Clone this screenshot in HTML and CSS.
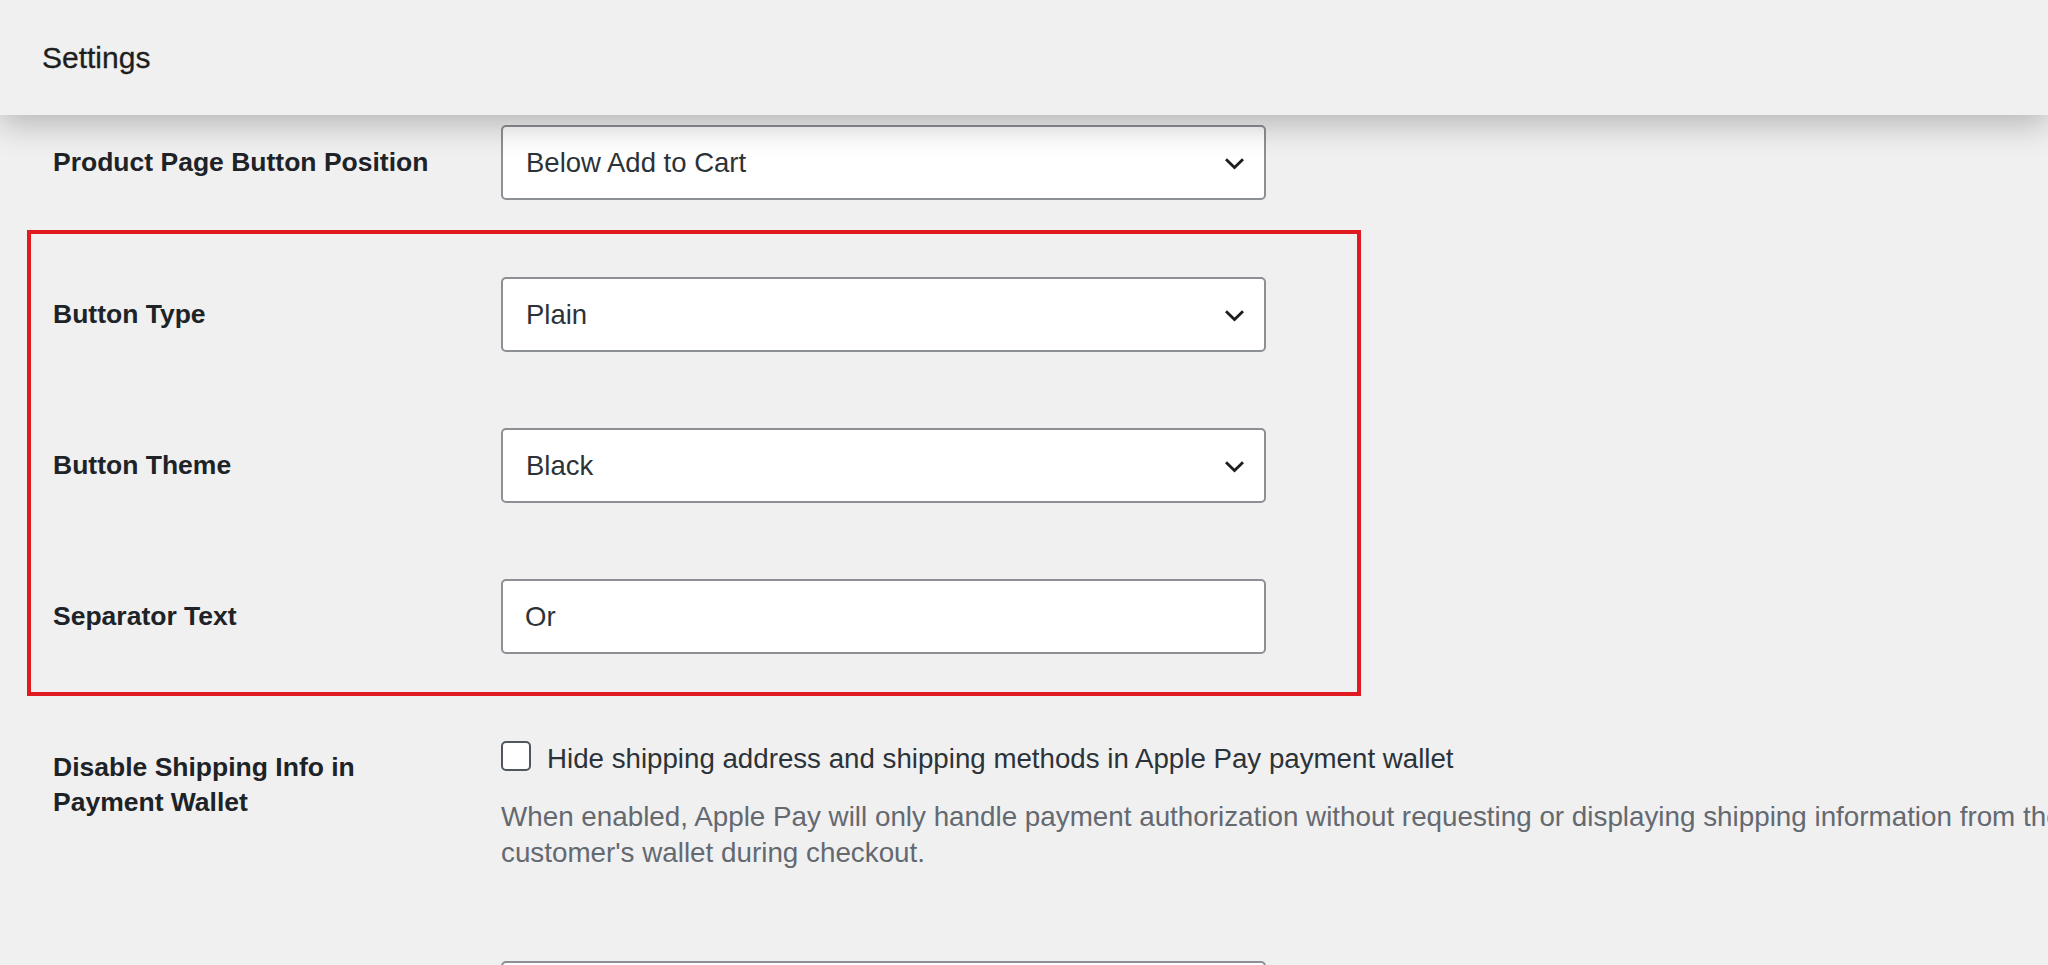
FILE: index.html
```html
<!DOCTYPE html>
<html lang="en">
<head>
<meta charset="utf-8">
<title>Settings</title>
<link rel="stylesheet" href="styles.css">
</head>
<body>
<header class="topbar">
  <h1 class="topbar-title">Settings</h1>
</header>
<main class="settings">
  <div class="row row-first">
    <label class="row-label" for="pos">Product Page Button Position</label>
    <div class="select-wrap">
      <select id="pos" class="control select"><option>Below Add to Cart</option></select>
      <svg class="chevron" viewBox="0 0 21 13" width="21" height="13" aria-hidden="true"><path d="M2 2.2 L10.5 10.5 L19 2.2" fill="none" stroke="#1e1e1e" stroke-width="2.8"/></svg>
    </div>
  </div>

  <section class="highlight">
    <div class="row">
      <label class="row-label" for="type">Button Type</label>
      <div class="select-wrap">
        <select id="type" class="control select"><option>Plain</option></select>
        <svg class="chevron" viewBox="0 0 21 13" width="21" height="13" aria-hidden="true"><path d="M2 2.2 L10.5 10.5 L19 2.2" fill="none" stroke="#1e1e1e" stroke-width="2.8"/></svg>
      </div>
    </div>
    <div class="row">
      <label class="row-label" for="theme">Button Theme</label>
      <div class="select-wrap">
        <select id="theme" class="control select"><option>Black</option></select>
        <svg class="chevron" viewBox="0 0 21 13" width="21" height="13" aria-hidden="true"><path d="M2 2.2 L10.5 10.5 L19 2.2" fill="none" stroke="#1e1e1e" stroke-width="2.8"/></svg>
      </div>
    </div>
    <div class="row">
      <label class="row-label" for="sep">Separator Text</label>
      <input id="sep" class="control text" type="text" value="Or">
    </div>
  </section>

  <div class="row row-check">
    <label class="row-label" for="ship">Disable Shipping Info in Payment Wallet</label>
    <div class="field">
      <div class="check-line">
        <input id="ship" class="checkbox" type="checkbox">
        <span>Hide shipping address and shipping methods in Apple Pay payment wallet</span>
      </div>
      <p class="description">When enabled, Apple Pay will only handle payment authorization without requesting or displaying shipping information from the customer's wallet during checkout.</p>
    </div>
  </div>

  <div class="row row-last">
    <span class="row-label"></span>
    <input class="control text" type="text" value="">
  </div>
</main>
</body>
</html>
```

FILE: styles.css
```css
html, body {
  margin: 0;
  padding: 0;
}

body {
  background: #f0f0f1;
  font-family: "Liberation Sans", Arial, sans-serif;
  color: #1d2327;
  overflow: hidden;
  width: 2048px;
  height: 965px;
}

.topbar {
  position: relative;
  z-index: 2;
  height: 115px;
  background: #f0f0f0;
  display: flex;
  align-items: center;
  padding-left: 42px;
  box-shadow: 0 10px 30px rgba(0, 0, 0, 0.24);
}

.topbar-title {
  margin: 0;
  font-size: 30px;
  font-weight: 400;
  line-height: 1.15;
  color: #1e1e1e;
  padding-top: 2px;
  -webkit-text-stroke: 0.3px #1e1e1e;
}

.settings {
  padding: 10px 0 0 53px;
}

.row {
  display: grid;
  grid-template-columns: 448px 765px;
  align-items: center;
}

.row-label {
  max-width: 400px;
  font-size: 26.5px;
  font-weight: 700;
  line-height: 35px;
  color: #1d2327;
}

.select-wrap {
  position: relative;
  height: 75px;
}

.control {
  box-sizing: border-box;
  width: 765px;
  height: 75px;
  margin: 0;
  padding: 0 22px;
  background: #fff;
  border: 2px solid #8c8f94;
  border-radius: 5px;
  font-family: "Liberation Sans", Arial, sans-serif;
  font-size: 27.5px;
  color: #2c3338;
  outline: none;
}

.select {
  appearance: none;
  -webkit-appearance: none;
  padding-right: 64px;
  padding-left: 23px;
}

.chevron {
  position: absolute;
  right: 21px;
  top: 32px;
  pointer-events: none;
}

.highlight {
  box-sizing: border-box;
  width: 1334px;
  margin: 30px 0 0 -26px;
  border: 4px solid #e01a21;
  padding: 43px 0 38px 22px;
  display: flex;
  flex-direction: column;
  gap: 76px;
}

.row-check {
  margin-top: 45px;
  grid-template-columns: 448px 1640px;
  align-items: start;
}

.row-check .row-label {
  padding-top: 9px;
}

.check-line {
  display: flex;
  align-items: flex-start;
  gap: 16px;
  font-size: 27.7px;
  line-height: 36px;
  color: #2c3338;
}

.checkbox {
  appearance: none;
  -webkit-appearance: none;
  flex: none;
  box-sizing: border-box;
  width: 30px;
  height: 30px;
  margin: 0;
  background: #fff;
  border: 2px solid #50575e;
  border-radius: 5px;
}

.description {
  margin: 22px 0 0;
  max-width: 1640px;
  font-size: 27.8px;
  line-height: 36px;
  color: #646970;
}

.row-last {
  margin-top: 90px;
  align-items: start;
}
```
